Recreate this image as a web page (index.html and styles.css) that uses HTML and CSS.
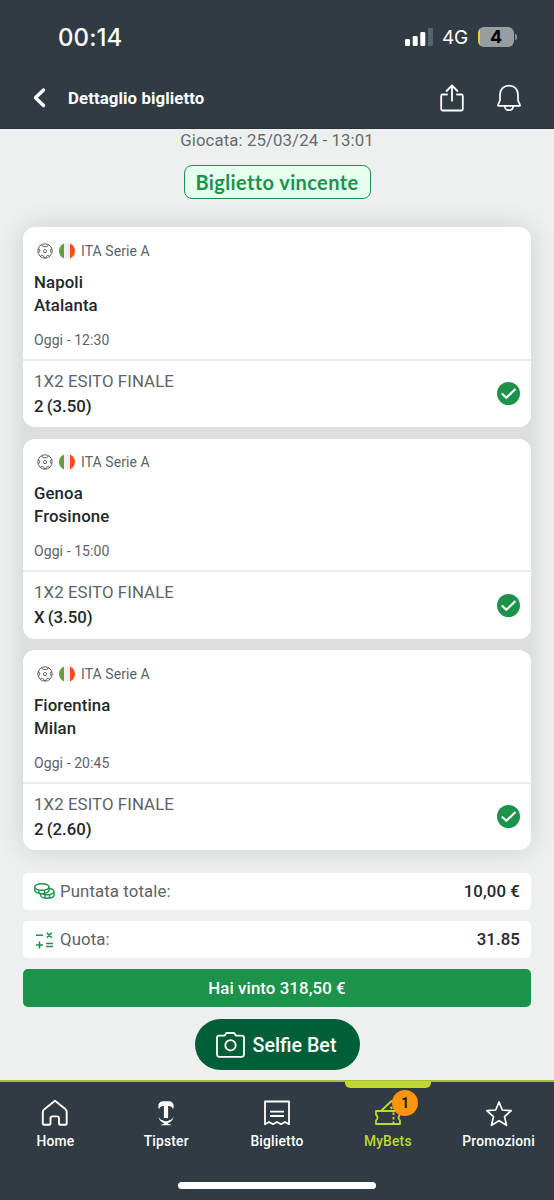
FILE: index.html
```html
<!DOCTYPE html>
<html lang="it">
<head>
<meta charset="utf-8">
<title>Dettaglio biglietto</title>
<link rel="stylesheet" href="styles.css">
</head>
<body>
<svg class="defs" aria-hidden="true">
  <symbol id="ball" viewBox="0 0 16 16"><g fill="none" stroke="#555c60" stroke-width=".95"><circle cx="8" cy="8" r="7.2"/><path d="M8 6.300l1.700 1.200-.6 2H6.900l-.6-2zM4.800 1.600Q5.200 3.600 6.300 3.600h3.400Q10.800 3.600 11.200 1.600M15 5.900q-2.100.2-1.700 1.500l.9 2.500M12.800 13.300q-1.500-1.600-2.700-.6-2 1.200-1.400 2.300M7.300 15q.5-1.200-1.400-2.300-1.200-1-2.700.6M1.800 9.900l.9-2.500Q3.100 6.100 1 5.900"/></g></symbol>
  <symbol id="check" viewBox="0 0 23 23"><circle cx="11.5" cy="11.5" r="11.5" fill="#1c924b"/><path d="M4.800 11.500l4.500 4.300 9.200-8.800" fill="none" stroke="#fff" stroke-width="2.200"/></symbol>
</svg>
<header class="top">
  <div class="status">
    <span class="time">00:14</span>
    <div class="signals">
      <svg class="bars" width="28" height="18" viewBox="0 0 28 18"><g fill="#fff"><rect x="0" y="11" width="5" height="7" rx="1.3"/><rect x="7.700" y="8" width="5" height="10" rx="1.3"/><rect x="15.300" y="4" width="5" height="14" rx="1.3"/></g><rect x="23" y="0" width="5" height="18" rx="1.3" fill="#59636a"/></svg>
      <span class="net">4G</span>
      <div class="battery">4</div><span class="cap"></span>
    </div>
  </div>
  <div class="titlebar">
    <svg class="back" width="13" height="22" viewBox="0 0 13 22"><path d="M10.500 3L2.500 10.800l8 7.700" fill="none" stroke="#fff" stroke-width="3.400" stroke-linecap="round" stroke-linejoin="round"/></svg>
    <h1 class="title">Dettaglio biglietto</h1>
    <svg class="share" width="24" height="28" viewBox="0 0 24 28"><g fill="none" stroke="#fff" stroke-width="1.800" stroke-linecap="round" stroke-linejoin="round"><path d="M7 10.500H2.500Q1.200 10.500 1.200 12v13Q1.200 26.500 2.500 26.500h19Q22.800 26.500 22.800 25V12Q22.800 10.500 21.500 10.500H17"/><path d="M12 16.800V1.500M6.600 7L12 1.500 17.400 7"/></g></svg>
    <svg class="bell" width="24" height="28" viewBox="0 0 24 28"><g fill="none" stroke="#fff" stroke-width="1.700" stroke-linejoin="round"><path d="M3 10.800C3 5.300 6.600 1.700 12 1.700s9 3.600 9 9.100v5.700l2 4.300q.5 1-.6 1H1.600q-1.100 0-.6-1l2-4.300z"/><path d="M7.800 22c0 2.800 1.800 4.200 4.200 4.200s4.200-1.400 4.200-4.200"/></g></svg>
  </div>
</header>
<main class="content">
  <div class="played">Giocata: 25/03/24 - 13:01</div>
  <div class="result">Biglietto vincente</div>
  <section class="cards">
    <article class="card">
      <div class="match">
        <div class="league"><svg class="ball"><use href="#ball"/></svg><i class="flag"></i><span>ITA Serie A</span></div>
        <div class="team">Napoli</div><div class="team">Atalanta</div>
        <div class="date">Oggi - 12:30</div>
      </div>
      <div class="pick"><div><div class="market">1X2 ESITO FINALE</div><div class="odds">2 (3.50)</div></div><svg class="check"><use href="#check"/></svg></div>
    </article>
    <article class="card">
      <div class="match">
        <div class="league"><svg class="ball"><use href="#ball"/></svg><i class="flag"></i><span>ITA Serie A</span></div>
        <div class="team">Genoa</div><div class="team">Frosinone</div>
        <div class="date">Oggi - 15:00</div>
      </div>
      <div class="pick"><div><div class="market">1X2 ESITO FINALE</div><div class="odds">X (3.50)</div></div><svg class="check"><use href="#check"/></svg></div>
    </article>
    <article class="card">
      <div class="match">
        <div class="league"><svg class="ball"><use href="#ball"/></svg><i class="flag"></i><span>ITA Serie A</span></div>
        <div class="team">Fiorentina</div><div class="team">Milan</div>
        <div class="date">Oggi - 20:45</div>
      </div>
      <div class="pick"><div><div class="market">1X2 ESITO FINALE</div><div class="odds">2 (2.60)</div></div><svg class="check"><use href="#check"/></svg></div>
    </article>
  </section>
  <section class="totals">
    <div class="row">
      <svg width="21" height="16" viewBox="0 0 21 16"><g fill="#fff" stroke="#1c924b" stroke-width="1.400"><path d="M6.500 9v3c0 1.800 3 3.200 6.800 3.200s6.700-1.400 6.700-3.200V8.500"/><ellipse cx="13.300" cy="8.500" rx="6.700" ry="3.200"/><path d="M11 12v3M15.500 12v3"/><path d="M.8 4v3.200c0 1.900 3 3.500 7 3.500s7.200-1.600 7.200-3.500V4"/><ellipse cx="7.900" cy="4" rx="7.100" ry="3.300"/><path d="M5 7.200v3M10.500 7.200v3"/></g></svg>
      <span class="label">Puntata totale:</span><b class="value">10,00 €</b>
    </div>
    <div class="row">
      <svg width="21" height="18" viewBox="0 0 21 18"><g fill="none" stroke="#1c924b" stroke-width="1.600"><path d="M2 4.200h7M12.800 1.800l5 5M17.800 1.800l-5 5M2 14h7M5.500 10.600v6.800M12 12.500h7M12 15.500h7"/></g></svg>
      <span class="label">Quota:</span><b class="value">31.85</b>
    </div>
    <div class="row won">Hai vinto 318,50 €</div>
  </section>
  <button class="selfie">
    <svg width="29" height="26" viewBox="0 0 29 26"><g fill="none" stroke="#fff" stroke-width="1.800" stroke-linejoin="round"><path d="M3.300 3.700H8q1 0 1.400-1Q9.800 1 11 1h6.600q1.200 0 1.600 1.700.4 1 1.400 1h5q2.400 0 2.400 2.200v16.400q0 2.500-2.400 2.500H3.400Q1 24.800 1 22.300V5.900q0-2.200 2.300-2.200z"/><circle cx="14.500" cy="13.300" r="5.200"/></g></svg>
    <span>Selfie Bet</span>
  </button>
</main>
<nav class="nav">
  <a class="tab"><svg width="28" height="28" viewBox="0 0 28 28"><path d="M1.800 13v11.500q0 1.300 1.300 1.300h5.100q1.300 0 1.300-1.300v-5.100q0-2 2-2h4.500q2 0 2 2v5.100q0 1.300 1.300 1.300h5.100q1.300 0 1.300-1.300V13Q25.700 11.200 24.300 10L14 1.800 3.700 10Q1.800 11.200 1.800 13z" fill="none" stroke="#fff" stroke-width="1.900" stroke-linejoin="round"/></svg><span>Home</span></a>
  <a class="tab"><svg width="28" height="28" viewBox="0 0 28 28"><g fill="#fff"><path d="M6.400 9.200V6.200Q7 2.500 11 2.200h6q4 .3 4.600 4v3l-1 .500q-.5-2.700-4-2.700h-.5v12H11.900v-12h-.5q-3.500 0-4 2.700z"/><path d="M6.500 17.500Q8 21.300 11 21.300q.4 1 3 1t3-1q3 0 4.500-3.800-.6 5-5.400 6.400l.1 1 2.600.5v.9H9.200v-.9l2.600-.5.100-1q-4.800-1.400-5.400-6.400z"/></g></svg><span>Tipster</span></a>
  <a class="tab"><svg width="28" height="28" viewBox="0 0 28 28"><g fill="none" stroke="#fff" stroke-width="1.800" stroke-linejoin="round"><path d="M2 2.500h24v22.700l-4-2.200-4 2.200-4-2.200-4 2.200L6 23l-4 2.200zM7 12.700h14M7 17h14"/></g></svg><span>Biglietto</span></a>
  <a class="tab active"><svg width="28" height="28" viewBox="0 0 28 28"><g fill="none" stroke="#bfd730" stroke-width="1.800" stroke-linejoin="round"><path d="M2 12h24v3.500q-3 2.800 0 6V25H2v-3.500q3-3.200 0-6zM7.500 11.500L17.500 2l3 2"/><path d="M19.500 13.500v11M16.500 8l2 2" stroke-dasharray="2.500 2"/></g></svg><i class="badge">1</i><span>MyBets</span></a>
  <a class="tab"><svg width="28" height="28" viewBox="0 0 28 28"><path d="M14 3l3.300 8 8.900.7-6.700 5.900 2 8.700-7.500-4.600-7.500 4.600 2-8.700-6.700-5.900 8.900-.7z" fill="none" stroke="#fff" stroke-width="1.700" stroke-linejoin="round"/></svg><span>Promozioni</span></a>
  <i class="homebar"></i>
</nav>
</body>
</html>
```
FILE: styles.css
```css
* { box-sizing: border-box; }
body { margin: 0; width: 554px; height: 1200px; overflow: hidden; display: flex; flex-direction: column; background: #eef0f0; color: #22282b; font-family: Roboto, sans-serif; }
svg { display: block; flex: none; }
.defs { position: absolute; width: 0; height: 0; }
.top { height: 129px; flex: none; background: #303b43; color: #fff; border-bottom: 1px solid #28333b; }
.status { height: 74px; display: flex; justify-content: space-between; padding: 0 37px 0 58px; align-items: center; }
.time { font: 500 24px/28px Inter, sans-serif; margin-top: 2px; letter-spacing: .1px; }
.signals { display: flex; align-items: center; }
.bars { margin-right: 1px; }
.net { font: 400 19px/24px Inter, sans-serif; margin: 2px 0 0 8px; width: 27px; letter-spacing: -.2px; }
.battery { width: 36px; height: 20px; margin-left: 9px; border-radius: 6px; background: linear-gradient(90deg, #f5ce27 0 2px, #989da1 2px); color: #000; font: 700 18px/20px Inter, sans-serif; text-align: center; }
.cap { width: 2px; height: 6px; margin-left: 1px; border-radius: 0 2px 2px 0; background: #859097; }
.titlebar { display: flex; align-items: center; height: 48px; padding: 0 33px; }
.title { margin: 0 auto 0 22px; font-size: 16.800px; line-height: 24px; font-weight: 700; letter-spacing: .1px; }
.share { margin-right: 33px; }
.content { flex: 1; display: flex; flex-direction: column; align-items: center; padding: 0 23px; }
.played { height: 22px; font-size: 16.800px; line-height: 22px; color: #666b6e; letter-spacing: .1px; }
.result { width: 187px; height: 34px; margin-top: 14px; border: 1.500px solid #1c924b; border-radius: 8px; background: #e6ffef; color: #1c924b; font: 700 20px/32px Lato, sans-serif; letter-spacing: .38px; text-align: center; }
.cards { align-self: stretch; display: flex; flex-direction: column; gap: 11.500px; margin-top: 28.400px; border-radius: 12px; background: #dededf; box-shadow: 0 0 28px rgba(0,0,0,.14); }
.card { height: 200px; border-radius: 12px; background: #fff; }
.match { height: 133.500px; border-bottom: 2px solid #ebebec; padding: 13px 11px 0; }
.league { height: 21px; display: flex; align-items: center; padding-left: 3px; color: #5d6367; font-size: 14px; letter-spacing: .08px; }
.ball { width: 16px; height: 16px; }
.flag { width: 16px; height: 16px; margin: 0 6px 0 6px; border-radius: 50%; background: linear-gradient(90deg, #649c40 0 33%, #f0f0f0 33% 67%, #fa4b19 67%); }
.team { font-size: 16.800px; line-height: 23px; font-weight: 500; letter-spacing: .1px; }
.league + .team { margin-top: 9.500px; }
.date { margin-top: 13px; font-size: 14px; line-height: 20px; color: #5d6367; letter-spacing: .08px; }
.pick { height: 65.500px; display: flex; align-items: center; justify-content: space-between; padding: 0 11px; }
.market { font-size: 16.800px; line-height: 25px; color: #5d6367; letter-spacing: .1px; }
.odds { font-size: 16.800px; line-height: 25px; font-weight: 500; word-spacing: -1px; }
.check { width: 23px; height: 23px; }
.totals { align-self: stretch; display: flex; flex-direction: column; gap: 11px; margin-top: 22.400px; }
.row { height: 37.300px; display: flex; align-items: center; padding: 0 11px; border-radius: 5px; background: #fff; font-size: 16.800px; letter-spacing: .1px; }
.row span, .row b { margin-top: -1px; }
.row .label { margin-left: 5px; color: #5d6367; }
.row .value { margin-left: auto; font-weight: 500; }
.won { justify-content: center; background: #1c924b; color: #fff; font-weight: 500; }
.selfie { width: 165px; height: 51px; margin: 12.500px 0 0; padding: 0 2px 0 0; border: 0; border-radius: 26px; background: #005e38; color: #fff; display: flex; align-items: center; justify-content: center; gap: 8px; font: 500 19.700px/24px Roboto, sans-serif; }
.selfie span { margin-top: 2px; }
.nav { position: relative; height: 120px; flex: none; display: grid; grid-template-columns: repeat(5, 1fr); border-top: 2px solid #a7bf35; background: #303b43; }
.tab { position: relative; height: 80px; display: flex; flex-direction: column; align-items: center; padding-top: 17px; color: #fff; font-size: 13.800px; line-height: 20px; font-weight: 500; letter-spacing: .2px; }
.tab span { margin-top: 4px; }
.active { color: #bfd730; }
.active::before { content: ""; position: absolute; top: -1px; width: 86px; height: 7px; border-radius: 0 0 5px 5px; background: #bfd730; }
.badge { position: absolute; left: 60px; top: 8px; width: 26px; height: 26px; border-radius: 50%; background: #ff950c; color: #111; font: 600 14px/26px Roboto, sans-serif; text-align: center; }
.homebar { position: absolute; left: 178px; top: 100px; width: 198px; height: 7px; border-radius: 4px; background: #fff; }
```
